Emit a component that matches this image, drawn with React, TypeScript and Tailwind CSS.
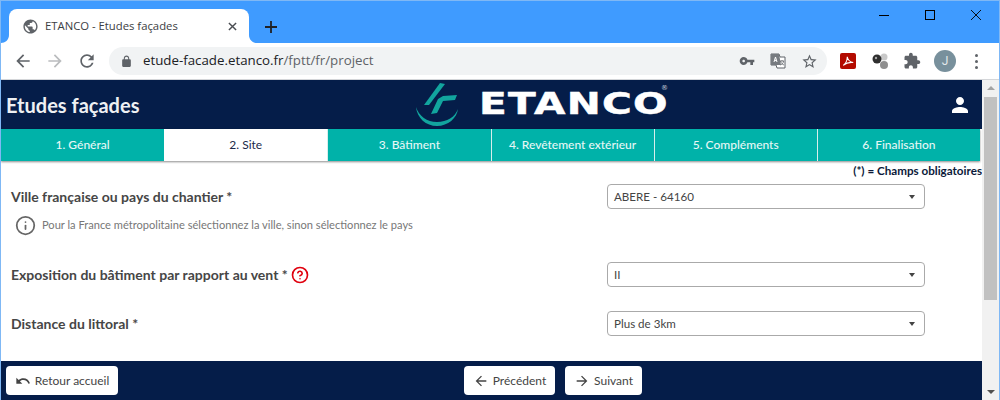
import { CircleHelp, Info } from 'lucide-react';

const ICONS = {
  back: 'M20 11H7.83l5.59-5.59L12 4l-8 8 8 8 1.41-1.41L7.83 13H20v-2z',
  forward: 'M4 11h12.17l-5.59-5.59L12 4l8 8-8 8-1.41-1.41L16.17 13H4v-2z',
  reload:
    'M17.65 6.35C16.2 4.9 14.21 4 12 4c-4.42 0-7.99 3.58-7.99 8s3.57 8 7.99 8c3.73 0 6.84-2.55 7.73-6h-2.08c-.82 2.33-3.04 4-5.65 4-3.31 0-6-2.69-6-6s2.69-6 6-6c1.66 0 3.14.69 4.22 1.78L13 11h7V4l-2.35 2.35z',
  lock: 'M18 8h-1V6c0-2.76-2.24-5-5-5S7 3.24 7 6v2H6c-1.1 0-2 .9-2 2v10c0 1.1.9 2 2 2h12c1.1 0 2-.9 2-2V10c0-1.1-.9-2-2-2zM9 6c0-1.66 1.34-3 3-3s3 1.34 3 3v2H9V6z',
  key: 'M12.65 10C11.83 7.67 9.61 6 7 6c-3.31 0-6 2.69-6 6s2.69 6 6 6c2.61 0 4.83-1.67 5.65-4H17v4h4v-4h2v-4H12.65zM7 14c-1.1 0-2-.9-2-2s.9-2 2-2 2 .9 2 2-.9 2-2 2z',
  star: 'M22 9.24l-7.19-.62L12 2 9.19 8.63 2 9.24l5.46 4.73L5.82 21 12 17.27 18.18 21l-1.63-7.03L22 9.24zM12 15.4l-3.76 2.27 1-4.28-3.32-2.88 4.38-.38L12 6.1l1.71 4.04 4.38.38-3.32 2.88 1 4.28L12 15.4z',
  puzzle:
    'M20.5 11H19V7c0-1.1-.9-2-2-2h-4V3.5C13 2.12 11.88 1 10.5 1S8 2.12 8 3.5V5H4c-1.1 0-1.99.9-1.99 2v3.8H3.5c1.49 0 2.7 1.21 2.7 2.7s-1.21 2.7-2.7 2.7H2V20c0 1.1.9 2 2 2h3.8v-1.5c0-1.49 1.21-2.7 2.7-2.7 1.49 0 2.7 1.21 2.7 2.7V22H17c1.1 0 2-.9 2-2v-4h1.5c1.38 0 2.5-1.12 2.5-2.5S21.88 11 20.5 11z',
  person:
    'M12 12c2.21 0 4-1.79 4-4s-1.79-4-4-4-4 1.79-4 4 1.79 4 4 4zm0 2c-2.67 0-8 1.34-8 4v2h16v-2c0-2.66-5.33-4-8-4z',
  globe:
    'M12 2C6.48 2 2 6.48 2 12s4.48 10 10 10 10-4.48 10-10S17.52 2 12 2zm-1 17.93c-3.95-.49-7-3.85-7-7.93 0-.62.08-1.21.21-1.79L9 15v1c0 1.1.9 2 2 2v1.93zm6.9-2.54c-.26-.81-1-1.39-1.9-1.39h-1v-3c0-.55-.45-1-1-1H8v-2h2c.55 0 1-.45 1-1V7h2c1.1 0 2-.9 2-2v-.41c2.93 1.19 5 4.06 5 7.41 0 2.08-.8 3.97-2.1 5.39z',
  undo: 'M12.5 8c-2.65 0-5.05.99-6.9 2.6L2 7v9h9l-3.62-3.62c1.39-1.16 3.16-1.88 5.12-1.88 3.54 0 6.55 2.31 7.6 5.5l2.37-.78C21.08 11.03 17.15 8 12.5 8z',
};

function Icon({ d, className }: { d: string; className: string }) {
  return (
    <svg viewBox="0 0 24 24" fill="currentColor" className={className}>
      <path d={d} />
    </svg>
  );
}

const STEPS = ['1. Général', '2. Site', '3. Bâtiment', '4. Revêtement extérieur', '5. Compléments', '6. Finalisation'];

function TitleBar() {
  return (
    <div className="flex h-[42px] shrink-0 bg-[#3f9bff] pl-[8px]">
      <div className="relative mt-[8px] flex h-[34px] w-[240px] items-center rounded-t-[8px] bg-white pl-[13px]">
        <svg viewBox="0 0 8 8" className="absolute bottom-0 left-[-8px] h-[8px] w-[8px] fill-white">
          <path d="M8 0v8H0c4 0 8-3 8-8z" />
        </svg>
        <svg viewBox="0 0 8 8" className="absolute bottom-0 right-[-8px] h-[8px] w-[8px] fill-white">
          <path d="M0 0v8h8C4 8 0 5 0 0z" />
        </svg>
        <Icon d={ICONS.globe} className="h-[17px] w-[17px] text-[#5f6368]" />
        <span className="ml-[6px] font-['Open_Sans',sans-serif] text-[11.300px] text-[#3c4043]">ETANCO - Etudes façades</span>
        <svg viewBox="0 0 10 10" className="ml-auto mr-[12px] h-[9px] w-[9px] stroke-[#4a4d52] stroke-[1.6]">
          <path d="M1 1l8 8M9 1l-8 8" />
        </svg>
      </div>
      <svg viewBox="0 0 12 12" className="ml-[16px] mt-[20px] h-[12px] w-[12px] stroke-[#202124] stroke-[1.8]">
        <path d="M6 0v12M0 6h12" />
      </svg>
      <div className="ml-auto mr-[18px] mt-[9px] flex h-[10px] items-center gap-[36px]">
        <div className="h-px w-[10px] bg-black" />
        <div className="h-[10px] w-[10px] border border-black" />
        <svg viewBox="0 0 10 10" className="h-[10px] w-[10px] stroke-black stroke-[0.9]">
          <path d="M0 0l10 10M10 0L0 10" />
        </svg>
      </div>
    </div>
  );
}

function Toolbar() {
  return (
    <div className="flex h-[37px] shrink-0 items-center border-b border-[#d4d6d9] bg-white pl-[12px] pr-[14px]">
      <Icon d={ICONS.back} className="h-[20px] w-[20px] text-[#5f6368]" />
      <Icon d={ICONS.forward} className="ml-[12px] h-[20px] w-[20px] text-[#babcbe]" />
      <Icon d={ICONS.reload} className="ml-[12px] h-[20px] w-[20px] text-[#5f6368]" />
      <div className="ml-[12px] flex h-[28px] w-[718px] items-center rounded-full bg-[#f1f3f4] pl-[11px] pr-[9px]">
        <Icon d={ICONS.lock} className="h-[13px] w-[13px] text-[#5f6368]" />
        <span className="ml-[10px] font-['Open_Sans',sans-serif] text-[13.300px] text-[#5f6368]">
          <span className="text-[#202124]">etude-facade.etanco.fr</span>/fptt/fr/project
        </span>
        <Icon d={ICONS.key} className="ml-auto h-[16px] w-[16px] text-[#5f6368]" />
        <svg viewBox="0 0 16 16" className="ml-[15px] h-[16px] w-[16px]">
          <path d="M1 1h8l1 3h5v11H7l-1-3H1z" fill="#fff" stroke="#5f6368" />
          <path d="M1 1h8l2 11H1z" fill="#777b80" />
          <path d="M4 9l1.5-5L7 9M4.6 7.4h1.8" fill="none" stroke="#fff" />
          <path d="M10 8h4M12 7v1M10.500 12c2-1 3-2 3-4M10.500 8c.5 2 2 3.500 3.500 4" fill="none" stroke="#5f6368" strokeWidth=".8" />
        </svg>
        <Icon d={ICONS.star} className="ml-[15px] h-[17px] w-[17px] text-[#5f6368]" />
      </div>
      <div className="ml-[13px] flex h-[16px] w-[16px] items-center justify-center rounded-[2px] bg-[#b30b00]">
        <svg viewBox="0 0 16 16" className="h-[14px] w-[14px] fill-none stroke-white stroke-[1.2]">
          <path d="M2.500 13C5 11.500 7 7 7.200 3.200 7.500 6 10 9.500 14 9.700 10 9.200 5.500 10.500 2.500 13z" />
        </svg>
      </div>
      <svg viewBox="0 0 18 17" className="ml-[16px] h-[17px] w-[18px]">
        <circle cx="12" cy="4" r="3.500" fill="#c9c9c9" />
        <circle cx="12" cy="12" r="4" fill="#8f8f8f" />
        <circle cx="5" cy="6" r="4.500" fill="#2f2f2f" />
        <circle cx="4" cy="5" r="1.200" fill="#a8a8a8" />
      </svg>
      <Icon d={ICONS.puzzle} className="ml-[13px] h-[18px] w-[18px] text-[#5f6368]" />
      <div className="ml-[13px] flex h-[22px] w-[22px] items-center justify-center rounded-full bg-[#78909c] font-['Roboto',sans-serif] text-[12px] text-[#e3e8eb]">
        J
      </div>
      <div className="ml-[19px] flex flex-col gap-[3px]">
        <div className="h-[3px] w-[3px] rounded-full bg-[#5f6368]" />
        <div className="h-[3px] w-[3px] rounded-full bg-[#5f6368]" />
        <div className="h-[3px] w-[3px] rounded-full bg-[#5f6368]" />
      </div>
    </div>
  );
}

function Logo() {
  return (
    <div className="flex items-center">
      <svg viewBox="0 0 44 46" className="h-[46px] w-[44px]">
        <path d="M25 1l5 1-16 21h-5z" fill="#12a59e" />
        <path d="M42 13l-2 5-12 1-6 12-6 1 7-15 5-3z" fill="#12a59e" />
        <path d="M1 25c1 11 10 19 21 19 11 0 20-8 21-17-3 8-11 13-21 13C12 40 4 34 1 25z" fill="#12a59e" />
      </svg>
      <div className="relative mb-[3px] ml-[20px] w-[186px]">
        <div className="origin-left scale-x-[1.31] font-['DejaVu_Sans',sans-serif] text-[31px] font-bold leading-[22px] tracking-[1px] text-white [-webkit-text-stroke:0.5px_white]">
          ETANCO
        </div>
        <span className="absolute right-[-3px] top-[-8px] font-['DejaVu_Sans',sans-serif] text-[7px] leading-[8px] text-[#c9d0db]">®</span>
      </div>
    </div>
  );
}

function Field({ label, value, help }: { label: string; value: string; help?: boolean }) {
  return (
    <div className="flex h-[25px] items-center pl-[10px] pr-[57px]">
      <span className="text-[14px] font-bold text-[#464646]">{label}</span>
      {help && <CircleHelp className="ml-[3px] h-[18px] w-[18px] text-[#e0000e]" strokeWidth={2.2} />}
      <div className="ml-auto flex h-[25px] w-[318px] items-center rounded-[4px] border border-[#aaaaaa] bg-white pl-[6px] pr-[9px] text-[11.600px] text-[#444444]">
        {value}
        <div className="ml-auto h-0 w-0 border-x-[3.500px] border-t-[4px] border-x-transparent border-t-[#444444]" />
      </div>
    </div>
  );
}

function FooterButton({ d, label, className }: { d: string; label: string; className?: string }) {
  return (
    <button
      type="button"
      className={`flex h-[29px] items-center justify-center gap-[4px] rounded-[4px] bg-white text-[12px] text-[#444444] ${className ?? ''}`}
    >
      <Icon d={d} className="h-[16px] w-[16px] text-[#444444]" />
      {label}
    </button>
  );
}

export default function App() {
  return (
    <div className="flex h-[400px] w-[1000px] flex-col overflow-hidden border-x border-t border-x-[#7fb8f5] border-t-[#7fb8f5] bg-white font-['Lato',sans-serif]">
      <TitleBar />
      <Toolbar />
      <div className="flex min-h-0 flex-1">
        <div className="flex w-[981px] flex-col">
          <header className="flex h-[49px] shrink-0 items-center bg-[#051d49] pl-[5px] pr-[10px]">
            <h1 className="w-[409px] text-[20px] font-bold text-[#eef0f3]">Etudes façades</h1>
            <Logo />
            <Icon d={ICONS.person} className="ml-auto h-[24px] w-[24px] text-white" />
          </header>
          <nav className="mr-[2px] grid h-[32px] shrink-0 grid-cols-6 shadow-[0_1px_2px_rgba(0,0,0,0.45)]">
            {STEPS.map((step, i) => (
              <div
                key={step}
                className={
                  i === 1
                    ? 'flex items-center justify-center bg-white text-[12px] text-[#1b2a4a]'
                    : 'flex items-center justify-center border-l border-[#d7eeec] bg-[#00b2a9] text-[12px] font-medium text-[#e6f7f6] first:border-l-0'
                }
              >
                {step}
              </div>
            ))}
          </nav>
          <p className="mt-[1px] shrink-0 text-right text-[11.650px] font-bold leading-[17px] text-[#0b1a3a]">(*) = Champs obligatoires</p>
          <div className="flex min-h-0 flex-1 flex-col pt-[5px]">
            <Field label="Ville française ou pays du chantier *" value="ABERE - 64160" />
            <div className="mt-[6px] flex items-center pl-[14px] text-[11.100px] text-[#777777]">
              <Info className="h-[21px] w-[21px] text-[#666666]" strokeWidth={2} />
              <span className="ml-[6px]">Pour la France métropolitaine sélectionnez la ville, sinon sélectionnez le pays</span>
            </div>
            <div className="mt-[26px]">
              <Field label="Exposition du bâtiment par rapport au vent *" value="II" help />
            </div>
            <div className="mt-[24px]">
              <Field label="Distance du littoral *" value="Plus de 3km" />
            </div>
          </div>
          <footer className="flex h-[39px] shrink-0 items-center bg-[#051d49] pl-[5px]">
            <FooterButton d={ICONS.undo} label="Retour accueil" className="w-[112px]" />
            <FooterButton d={ICONS.back} label="Précédent" className="ml-[346px] w-[91px]" />
            <FooterButton d={ICONS.forward} label="Suivant" className="ml-[10px] w-[77px]" />
          </footer>
        </div>
        <div className="flex w-[17px] shrink-0 flex-col items-center bg-[#f1f1f1]">
          <div className="mt-[6px] h-0 w-0 border-x-[4px] border-b-[4px] border-x-transparent border-b-[#a3a3a3]" />
          <div className="mt-[7px] h-[203px] w-[13px] bg-[#c1c1c1]" />
          <div className="mb-[6px] mt-auto h-0 w-0 border-x-[4px] border-t-[4px] border-x-transparent border-t-[#505050]" />
        </div>
      </div>
    </div>
  );
}
